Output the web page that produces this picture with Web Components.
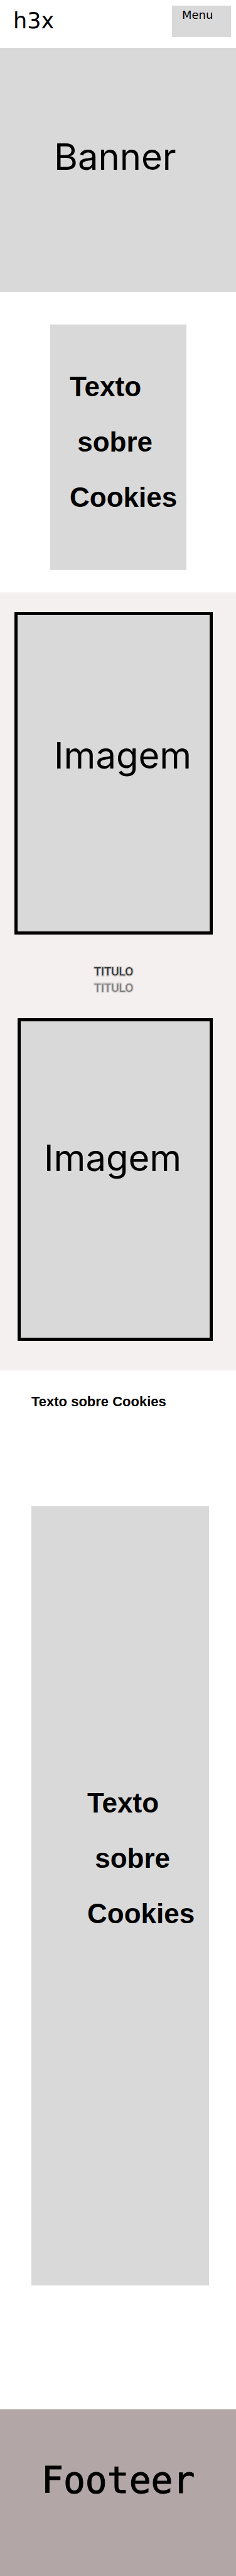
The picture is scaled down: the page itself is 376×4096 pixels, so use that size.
<!DOCTYPE html>
<html lang="pt">
<head>
<meta charset="utf-8">
<meta name="viewport" content="width=device-width, initial-scale=1">
<title>h3x</title>
<style>
  body { margin: 0; background: #fff; color: #000; font-family: Inter, sans-serif; }
</style>
</head>
<body>
<h3x-page></h3x-page>
<script>
  class BaseElement extends HTMLElement {
    constructor() {
      super();
      this.attachShadow({ mode: 'open' }).innerHTML = this.constructor.markup;
    }
  }

  class H3xHeader extends BaseElement {
    static markup = `
      <style>
        :host { display: block; font-family: "DejaVu Sans", sans-serif; }
        header { display: flex; justify-content: space-between; align-items: flex-start; padding: 9px 8px 17px 21px; }
        a { margin-top: 4px; color: inherit; text-decoration: none; font-size: 35px; line-height: 41px; }
        button { display: flex; align-items: flex-start; min-width: 94px; min-height: 50px; padding: 4px 16px; border: 0;
          background: #d9d9d9; color: inherit; font-family: inherit; font-size: 18px; line-height: 21px; }
      </style>
      <header><a href="#">h3x</a><button type="button">Menu</button></header>`;
  }

  class H3xBanner extends BaseElement {
    static markup = `
      <style>
        :host { display: block; background: #d9d9d9; padding: 138px 20px 180px 86px; }
        h1 { margin: 0; font-size: 58px; line-height: 70px; font-weight: 400; }
      </style>
      <h1><slot></slot></h1>`;
  }

  class H3xTextPanel extends BaseElement {
    static markup = `
      <style>
        :host { display: block; background: #d9d9d9; }
        p { margin: 0; font: 700 44px/88px "Liberation Sans", sans-serif; white-space: pre; }
      </style>
      <p>Texto\n sobre\nCookies</p>`;
  }

  class H3xImageCard extends BaseElement {
    static markup = `
      <style>
        :host { display: block; box-sizing: border-box; border: 5px solid #000; background: #d9d9d9; }
        p { margin: 0; font-size: 58px; line-height: 70px; }
      </style>
      <p><slot></slot></p>`;
  }

  class H3xGallery extends BaseElement {
    static markup = `
      <style>
        :host { display: block; background: #f4f0ef; padding: 31px 37px 47px 23px; }
        .first { padding: 188px 0 245px 58px; }
        .second { margin-left: 5px; padding: 182px 0 251px 37px; }
        .titles { padding: 46px 0 35px; text-align: center; font: 400 19px/26px Roboto, sans-serif;
          -webkit-text-stroke: 3px #c9c7c6; paint-order: stroke fill; }
        p { margin: 0; color: #2c2c2c; }
        p + p { color: #7c7979; -webkit-text-stroke-color: #d3d0cf; }
      </style>
      <h3x-image-card class="first">Imagem</h3x-image-card>
      <div class="titles"><p>TITULO</p><p>TITULO</p></div>
      <h3x-image-card class="second">Imagem</h3x-image-card>`;
  }

  class H3xArticle extends BaseElement {
    static markup = `
      <style>
        :host { display: block; padding: 37px 43px 197px 50px; }
        h2 { margin: 0 0 153px; font: 700 22px/26px "Liberation Sans", sans-serif; }
        h3x-text-panel { padding: 428px 0 547px 89px; }
      </style>
      <h2>Texto sobre Cookies</h2>
      <h3x-text-panel></h3x-text-panel>`;
  }

  class H3xFooter extends BaseElement {
    static markup = `
      <style>
        :host { display: block; background: #b2a7a6; padding: 79px 20px 118px 66px; }
        footer { font: 400 58px/68px "DejaVu Sans Mono", monospace; -webkit-text-stroke: 1px #000; }
      </style>
      <footer><slot></slot></footer>`;
  }

  class H3xPage extends BaseElement {
    static markup = `
      <style>
        :host { display: block; }
        .intro { padding: 52px 79px 36px 80px; }
        .intro h3x-text-panel { padding: 55px 0 71px 31px; }
      </style>
      <h3x-header></h3x-header>
      <main>
        <h3x-banner>Banner</h3x-banner>
        <section class="intro"><h3x-text-panel></h3x-text-panel></section>
        <h3x-gallery></h3x-gallery>
        <h3x-article></h3x-article>
      </main>
      <h3x-footer>Footeer</h3x-footer>`;
  }

  customElements.define('h3x-header', H3xHeader);
  customElements.define('h3x-banner', H3xBanner);
  customElements.define('h3x-text-panel', H3xTextPanel);
  customElements.define('h3x-image-card', H3xImageCard);
  customElements.define('h3x-gallery', H3xGallery);
  customElements.define('h3x-article', H3xArticle);
  customElements.define('h3x-footer', H3xFooter);
  customElements.define('h3x-page', H3xPage);
</script>
</body>
</html>
